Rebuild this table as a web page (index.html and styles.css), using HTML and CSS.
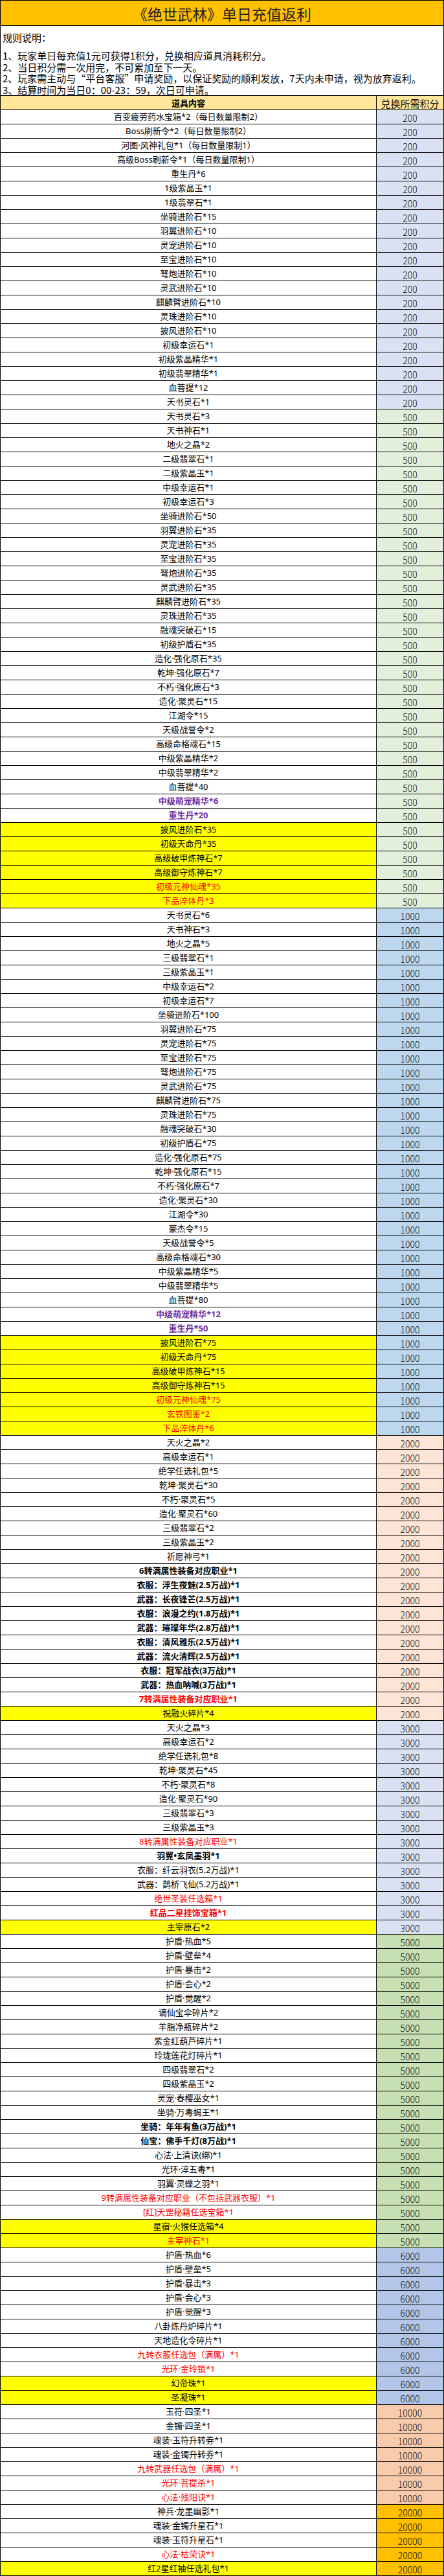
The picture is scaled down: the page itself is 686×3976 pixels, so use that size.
FILE: index.html
```html
<!DOCTYPE html>
<html lang="zh-CN">
<head>
<meta charset="utf-8">
<title>《绝世武林》单日充值返利</title>
<link rel="stylesheet" href="styles.css">
</head>
<body>
<div class="sheet">
  <div class="title">《绝世武林》单日充值返利</div>
  <div class="rules">
    <p class="rules-head">规则说明：</p>
    <p>1、玩家单日每充值1元可获得1积分，兑换相应道具消耗积分。</p>
    <p>2、当日积分需一次用完，不可累加至下一天。</p>
    <p>2、玩家需主动与“平台客服”申请奖励，以保证奖励的顺利发放，7天内未申请，视为放弃返利。</p>
    <p>3、结算时间为当日0：00-23：59，次日可申请。</p>
  </div>
  <div class="row head"><div class="item">道具内容</div><div class="pts">兑换所需积分</div></div>

  <div class="row"><div class="item">百变疲劳药水宝箱*2（每日数量限制2）</div><div class="pts p200">200</div></div>
  <div class="row"><div class="item">Boss刷新令*2（每日数量限制2）</div><div class="pts p200">200</div></div>
  <div class="row"><div class="item">河图·风神礼包*1（每日数量限制1）</div><div class="pts p200">200</div></div>
  <div class="row"><div class="item">高级Boss刷新令*1（每日数量限制1）</div><div class="pts p200">200</div></div>
  <div class="row"><div class="item">重生丹*6</div><div class="pts p200">200</div></div>
  <div class="row"><div class="item">1级紫晶玉*1</div><div class="pts p200">200</div></div>
  <div class="row"><div class="item">1级翡翠石*1</div><div class="pts p200">200</div></div>
  <div class="row"><div class="item">坐骑进阶石*15</div><div class="pts p200">200</div></div>
  <div class="row"><div class="item">羽翼进阶石*10</div><div class="pts p200">200</div></div>
  <div class="row"><div class="item">灵宠进阶石*10</div><div class="pts p200">200</div></div>
  <div class="row"><div class="item">至宝进阶石*10</div><div class="pts p200">200</div></div>
  <div class="row"><div class="item">弩炮进阶石*10</div><div class="pts p200">200</div></div>
  <div class="row"><div class="item">灵武进阶石*10</div><div class="pts p200">200</div></div>
  <div class="row"><div class="item">麒麟臂进阶石*10</div><div class="pts p200">200</div></div>
  <div class="row"><div class="item">灵珠进阶石*10</div><div class="pts p200">200</div></div>
  <div class="row"><div class="item">披风进阶石*10</div><div class="pts p200">200</div></div>
  <div class="row"><div class="item">初级幸运石*1</div><div class="pts p200">200</div></div>
  <div class="row"><div class="item">初级紫晶精华*1</div><div class="pts p200">200</div></div>
  <div class="row"><div class="item">初级翡翠精华*1</div><div class="pts p200">200</div></div>
  <div class="row"><div class="item">血菩提*12</div><div class="pts p200">200</div></div>
  <div class="row"><div class="item">天书灵石*1</div><div class="pts p200">200</div></div>

  <div class="row"><div class="item">天书灵石*3</div><div class="pts p500">500</div></div>
  <div class="row"><div class="item">天书神石*1</div><div class="pts p500">500</div></div>
  <div class="row"><div class="item">地火之晶*2</div><div class="pts p500">500</div></div>
  <div class="row"><div class="item">二级翡翠石*1</div><div class="pts p500">500</div></div>
  <div class="row"><div class="item">二级紫晶玉*1</div><div class="pts p500">500</div></div>
  <div class="row"><div class="item">中级幸运石*1</div><div class="pts p500">500</div></div>
  <div class="row"><div class="item">初级幸运石*3</div><div class="pts p500">500</div></div>
  <div class="row"><div class="item">坐骑进阶石*50</div><div class="pts p500">500</div></div>
  <div class="row"><div class="item">羽翼进阶石*35</div><div class="pts p500">500</div></div>
  <div class="row"><div class="item">灵宠进阶石*35</div><div class="pts p500">500</div></div>
  <div class="row"><div class="item">至宝进阶石*35</div><div class="pts p500">500</div></div>
  <div class="row"><div class="item">弩炮进阶石*35</div><div class="pts p500">500</div></div>
  <div class="row"><div class="item">灵武进阶石*35</div><div class="pts p500">500</div></div>
  <div class="row"><div class="item">麒麟臂进阶石*35</div><div class="pts p500">500</div></div>
  <div class="row"><div class="item">灵珠进阶石*35</div><div class="pts p500">500</div></div>
  <div class="row"><div class="item">融魂突破石*15</div><div class="pts p500">500</div></div>
  <div class="row"><div class="item">初级护盾石*35</div><div class="pts p500">500</div></div>
  <div class="row"><div class="item">造化·强化原石*35</div><div class="pts p500">500</div></div>
  <div class="row"><div class="item">乾坤·强化原石*7</div><div class="pts p500">500</div></div>
  <div class="row"><div class="item">不朽·强化原石*3</div><div class="pts p500">500</div></div>
  <div class="row"><div class="item">造化·聚灵石*15</div><div class="pts p500">500</div></div>
  <div class="row"><div class="item">江湖令*15</div><div class="pts p500">500</div></div>
  <div class="row"><div class="item">天级战誉令*2</div><div class="pts p500">500</div></div>
  <div class="row"><div class="item">高级命格魂石*15</div><div class="pts p500">500</div></div>
  <div class="row"><div class="item">中级紫晶精华*2</div><div class="pts p500">500</div></div>
  <div class="row"><div class="item">中级翡翠精华*2</div><div class="pts p500">500</div></div>
  <div class="row"><div class="item">血菩提*40</div><div class="pts p500">500</div></div>
  <div class="row"><div class="item purple">中级萌宠精华*6</div><div class="pts p500">500</div></div>
  <div class="row"><div class="item purple">重生丹*20</div><div class="pts p500">500</div></div>
  <div class="row hl"><div class="item">披风进阶石*35</div><div class="pts p500">500</div></div>
  <div class="row hl"><div class="item">初级天命丹*35</div><div class="pts p500">500</div></div>
  <div class="row hl"><div class="item">高级破甲炼神石*7</div><div class="pts p500">500</div></div>
  <div class="row hl"><div class="item">高级御守炼神石*7</div><div class="pts p500">500</div></div>
  <div class="row hl"><div class="item red">初级元神仙魂*35</div><div class="pts p500">500</div></div>
  <div class="row hl"><div class="item red">下品淬体丹*3</div><div class="pts p500">500</div></div>

  <div class="row"><div class="item">天书灵石*6</div><div class="pts p1000">1000</div></div>
  <div class="row"><div class="item">天书神石*3</div><div class="pts p1000">1000</div></div>
  <div class="row"><div class="item">地火之晶*5</div><div class="pts p1000">1000</div></div>
  <div class="row"><div class="item">三级翡翠石*1</div><div class="pts p1000">1000</div></div>
  <div class="row"><div class="item">三级紫晶玉*1</div><div class="pts p1000">1000</div></div>
  <div class="row"><div class="item">中级幸运石*2</div><div class="pts p1000">1000</div></div>
  <div class="row"><div class="item">初级幸运石*7</div><div class="pts p1000">1000</div></div>
  <div class="row"><div class="item">坐骑进阶石*100</div><div class="pts p1000">1000</div></div>
  <div class="row"><div class="item">羽翼进阶石*75</div><div class="pts p1000">1000</div></div>
  <div class="row"><div class="item">灵宠进阶石*75</div><div class="pts p1000">1000</div></div>
  <div class="row"><div class="item">至宝进阶石*75</div><div class="pts p1000">1000</div></div>
  <div class="row"><div class="item">弩炮进阶石*75</div><div class="pts p1000">1000</div></div>
  <div class="row"><div class="item">灵武进阶石*75</div><div class="pts p1000">1000</div></div>
  <div class="row"><div class="item">麒麟臂进阶石*75</div><div class="pts p1000">1000</div></div>
  <div class="row"><div class="item">灵珠进阶石*75</div><div class="pts p1000">1000</div></div>
  <div class="row"><div class="item">融魂突破石*30</div><div class="pts p1000">1000</div></div>
  <div class="row"><div class="item">初级护盾石*75</div><div class="pts p1000">1000</div></div>
  <div class="row"><div class="item">造化·强化原石*75</div><div class="pts p1000">1000</div></div>
  <div class="row"><div class="item">乾坤·强化原石*15</div><div class="pts p1000">1000</div></div>
  <div class="row"><div class="item">不朽·强化原石*7</div><div class="pts p1000">1000</div></div>
  <div class="row"><div class="item">造化·聚灵石*30</div><div class="pts p1000">1000</div></div>
  <div class="row"><div class="item">江湖令*30</div><div class="pts p1000">1000</div></div>
  <div class="row"><div class="item">豪杰令*15</div><div class="pts p1000">1000</div></div>
  <div class="row"><div class="item">天级战誉令*5</div><div class="pts p1000">1000</div></div>
  <div class="row"><div class="item">高级命格魂石*30</div><div class="pts p1000">1000</div></div>
  <div class="row"><div class="item">中级紫晶精华*5</div><div class="pts p1000">1000</div></div>
  <div class="row"><div class="item">中级翡翠精华*5</div><div class="pts p1000">1000</div></div>
  <div class="row"><div class="item">血菩提*80</div><div class="pts p1000">1000</div></div>
  <div class="row"><div class="item purple">中级萌宠精华*12</div><div class="pts p1000">1000</div></div>
  <div class="row"><div class="item purple">重生丹*50</div><div class="pts p1000">1000</div></div>
  <div class="row hl"><div class="item">披风进阶石*75</div><div class="pts p1000">1000</div></div>
  <div class="row hl"><div class="item">初级天命丹*75</div><div class="pts p1000">1000</div></div>
  <div class="row hl"><div class="item">高级破甲炼神石*15</div><div class="pts p1000">1000</div></div>
  <div class="row hl"><div class="item">高级御守炼神石*15</div><div class="pts p1000">1000</div></div>
  <div class="row hl"><div class="item red">初级元神仙魂*75</div><div class="pts p1000">1000</div></div>
  <div class="row hl"><div class="item red">玄铁图鉴*2</div><div class="pts p1000">1000</div></div>
  <div class="row hl"><div class="item red">下品淬体丹*6</div><div class="pts p1000">1000</div></div>

  <div class="row"><div class="item">天火之晶*2</div><div class="pts p2000">2000</div></div>
  <div class="row"><div class="item">高级幸运石*1</div><div class="pts p2000">2000</div></div>
  <div class="row"><div class="item">绝学任选礼包*5</div><div class="pts p2000">2000</div></div>
  <div class="row"><div class="item">乾坤·聚灵石*30</div><div class="pts p2000">2000</div></div>
  <div class="row"><div class="item">不朽·聚灵石*5</div><div class="pts p2000">2000</div></div>
  <div class="row"><div class="item">造化·聚灵石*60</div><div class="pts p2000">2000</div></div>
  <div class="row"><div class="item">三级翡翠石*2</div><div class="pts p2000">2000</div></div>
  <div class="row"><div class="item">三级紫晶玉*2</div><div class="pts p2000">2000</div></div>
  <div class="row"><div class="item">祈愿神弓*1</div><div class="pts p2000">2000</div></div>
  <div class="row"><div class="item bold">6转满属性装备对应职业*1</div><div class="pts p2000">2000</div></div>
  <div class="row"><div class="item bold">衣服：浮生夜魅(2.5万战)*1</div><div class="pts p2000">2000</div></div>
  <div class="row"><div class="item bold">武器：长夜锋芒(2.5万战)*1</div><div class="pts p2000">2000</div></div>
  <div class="row"><div class="item bold">衣服：浪漫之约(1.8万战)*1</div><div class="pts p2000">2000</div></div>
  <div class="row"><div class="item bold">武器：璀璨年华(2.8万战)*1</div><div class="pts p2000">2000</div></div>
  <div class="row"><div class="item bold">衣服：清风雅乐(2.5万战)*1</div><div class="pts p2000">2000</div></div>
  <div class="row"><div class="item bold">武器：流火清辉(2.5万战)*1</div><div class="pts p2000">2000</div></div>
  <div class="row"><div class="item bold">衣服：冠军战衣(3万战)*1</div><div class="pts p2000">2000</div></div>
  <div class="row"><div class="item bold">武器：热血呐喊(3万战)*1</div><div class="pts p2000">2000</div></div>
  <div class="row"><div class="item bold red">7转满属性装备对应职业*1</div><div class="pts p2000">2000</div></div>
  <div class="row hl"><div class="item">祝融火碎片*4</div><div class="pts p2000">2000</div></div>

  <div class="row"><div class="item">天火之晶*3</div><div class="pts p3000">3000</div></div>
  <div class="row"><div class="item">高级幸运石*2</div><div class="pts p3000">3000</div></div>
  <div class="row"><div class="item">绝学任选礼包*8</div><div class="pts p3000">3000</div></div>
  <div class="row"><div class="item">乾坤·聚灵石*45</div><div class="pts p3000">3000</div></div>
  <div class="row"><div class="item">不朽·聚灵石*8</div><div class="pts p3000">3000</div></div>
  <div class="row"><div class="item">造化·聚灵石*90</div><div class="pts p3000">3000</div></div>
  <div class="row"><div class="item">三级翡翠石*3</div><div class="pts p3000">3000</div></div>
  <div class="row"><div class="item">三级紫晶玉*3</div><div class="pts p3000">3000</div></div>
  <div class="row"><div class="item red">8转满属性装备对应职业*1</div><div class="pts p3000">3000</div></div>
  <div class="row"><div class="item bold">羽翼•玄凤墨羽*1</div><div class="pts p3000">3000</div></div>
  <div class="row"><div class="item">衣服：纤云羽衣(5.2万战)*1</div><div class="pts p3000">3000</div></div>
  <div class="row"><div class="item">武器：鹊桥飞仙(5.2万战)*1</div><div class="pts p3000">3000</div></div>
  <div class="row"><div class="item red">绝世圣装任选箱*1</div><div class="pts p3000">3000</div></div>
  <div class="row"><div class="item bold red">红品二星挂饰宝箱*1</div><div class="pts p3000">3000</div></div>
  <div class="row hl"><div class="item">主宰原石*2</div><div class="pts p3000">3000</div></div>

  <div class="row"><div class="item">护盾·热血*5</div><div class="pts p5000">5000</div></div>
  <div class="row"><div class="item">护盾·壁垒*4</div><div class="pts p5000">5000</div></div>
  <div class="row"><div class="item">护盾·暴击*2</div><div class="pts p5000">5000</div></div>
  <div class="row"><div class="item">护盾·会心*2</div><div class="pts p5000">5000</div></div>
  <div class="row"><div class="item">护盾·觉醒*2</div><div class="pts p5000">5000</div></div>
  <div class="row"><div class="item">谪仙宝伞碎片*2</div><div class="pts p5000">5000</div></div>
  <div class="row"><div class="item">羊脂净瓶碎片*2</div><div class="pts p5000">5000</div></div>
  <div class="row"><div class="item">紫金红葫芦碎片*1</div><div class="pts p5000">5000</div></div>
  <div class="row"><div class="item">玲珑莲花灯碎片*1</div><div class="pts p5000">5000</div></div>
  <div class="row"><div class="item">四级翡翠石*2</div><div class="pts p5000">5000</div></div>
  <div class="row"><div class="item">四级紫晶玉*2</div><div class="pts p5000">5000</div></div>
  <div class="row"><div class="item">灵宠·春樱巫女*1</div><div class="pts p5000">5000</div></div>
  <div class="row"><div class="item">坐骑·万毒蝎王*1</div><div class="pts p5000">5000</div></div>
  <div class="row"><div class="item bold">坐骑：年年有鱼(3万战)*1</div><div class="pts p5000">5000</div></div>
  <div class="row"><div class="item bold">仙宝：佛手千灯(8万战)*1</div><div class="pts p5000">5000</div></div>
  <div class="row"><div class="item">心法·上清诀(绑)*1</div><div class="pts p5000">5000</div></div>
  <div class="row"><div class="item">光环·淬五毒*1</div><div class="pts p5000">5000</div></div>
  <div class="row"><div class="item">羽翼·灵蝶之羽*1</div><div class="pts p5000">5000</div></div>
  <div class="row"><div class="item red">9转满属性装备对应职业（不包括武器衣服）*1</div><div class="pts p5000">5000</div></div>
  <div class="row"><div class="item red">[红]天罡秘籍任选宝箱*1</div><div class="pts p5000">5000</div></div>
  <div class="row hl"><div class="item">星宿·火猴任选箱*4</div><div class="pts p5000">5000</div></div>
  <div class="row hl"><div class="item red">主宰神石*1</div><div class="pts p5000">5000</div></div>

  <div class="row"><div class="item">护盾·热血*6</div><div class="pts p6000">6000</div></div>
  <div class="row"><div class="item">护盾·壁垒*5</div><div class="pts p6000">6000</div></div>
  <div class="row"><div class="item">护盾·暴击*3</div><div class="pts p6000">6000</div></div>
  <div class="row"><div class="item">护盾·会心*3</div><div class="pts p6000">6000</div></div>
  <div class="row"><div class="item">护盾·觉醒*3</div><div class="pts p6000">6000</div></div>
  <div class="row"><div class="item">八卦炼丹炉碎片*1</div><div class="pts p6000">6000</div></div>
  <div class="row"><div class="item">天地造化令碎片*1</div><div class="pts p6000">6000</div></div>
  <div class="row"><div class="item red">九转衣服任选包（满属）*1</div><div class="pts p6000">6000</div></div>
  <div class="row"><div class="item red">光环·金玲锁*1</div><div class="pts p6000">6000</div></div>
  <div class="row hl"><div class="item">幻帝珠*1</div><div class="pts p6000">6000</div></div>
  <div class="row hl"><div class="item">圣凝珠*1</div><div class="pts p6000">6000</div></div>

  <div class="row"><div class="item">玉符·四圣*1</div><div class="pts p10000">10000</div></div>
  <div class="row"><div class="item">金镯·四圣*1</div><div class="pts p10000">10000</div></div>
  <div class="row"><div class="item">魂装·玉符升转券*1</div><div class="pts p10000">10000</div></div>
  <div class="row"><div class="item">魂装·金镯升转券*1</div><div class="pts p10000">10000</div></div>
  <div class="row"><div class="item red">九转武器任选包（满属）*1</div><div class="pts p10000">10000</div></div>
  <div class="row"><div class="item red">光环·菩提杀*1</div><div class="pts p10000">10000</div></div>
  <div class="row"><div class="item red">心法·残阳诀*1</div><div class="pts p10000">10000</div></div>

  <div class="row"><div class="item">神兵·龙墨幽影*1</div><div class="pts p20000">20000</div></div>
  <div class="row"><div class="item">魂装·金镯升星石*1</div><div class="pts p20000">20000</div></div>
  <div class="row"><div class="item">魂装·玉符升星石*1</div><div class="pts p20000">20000</div></div>
  <div class="row"><div class="item red">心法·枯荣诀*1</div><div class="pts p20000">20000</div></div>
  <div class="row hl"><div class="item">红2星红袖任选礼包*1</div><div class="pts p20000">20000</div></div>
</div>
</body>
</html>
```
FILE: styles.css
```css
* {
  box-sizing: border-box;
}

body {
  margin: 0;
  background: #ffffff;
  color: #000000;
  font-family: "Noto Sans CJK SC", "Liberation Sans", sans-serif;
}

.sheet {
  width: 686px;
  border-left: 1px solid #000;
  border-right: 1px solid #000;
  border-top: 1px solid #000;
}

.title {
  height: 39px;
  background: #ffc000;
  border-bottom: 1px solid #000;
  display: flex;
  align-items: center;
  justify-content: center;
  padding-top: 3px;
  font-size: 23px;
  color: #222;
  line-height: 1;
}

.rules {
  height: 108px;
  border-bottom: 1px solid #000;
  padding: 9px 3px 0;
  font-size: 15px;
  overflow: hidden;
}

.rules p {
  margin: 0;
  line-height: 17.5px;
  white-space: nowrap;
}

.rules .rules-head {
  line-height: 18px;
  margin-bottom: 10px;
}

.row {
  display: grid;
  grid-template-columns: 581px 1fr;
  height: 22px;
}

.item {
  border-right: 1px solid #000;
  border-bottom: 1px solid #000;
  display: flex;
  align-items: center;
  justify-content: center;
  font-family: "Noto Sans", "Noto Sans CJK SC", sans-serif;
  font-size: 13px;
  line-height: 1;
  white-space: nowrap;
}

.pts {
  border-bottom: 1px solid #000;
  display: flex;
  align-items: center;
  justify-content: center;
  padding-top: 3px;
  font-size: 14px;
  font-weight: 300;
  line-height: 1;
  color: #111;
}

.head {
  background: #ffe699;
}

.head .item {
  font-family: "Noto Sans CJK SC", sans-serif;
  font-weight: bold;
}

.head .pts {
  font-size: 15px;
  font-weight: normal;
  padding-top: 2px;
}

.hl .item {
  background: #ffff00;
}

.purple {
  color: #7030a0;
  font-weight: bold;
}

.bold {
  font-weight: bold;
}

.red {
  color: #ff0000;
}

.p200 { background: #d9e1f2; }
.p500 { background: #e2efda; }
.p1000 { background: #bdd7ee; }
.p2000 { background: #fce4d6; }
.p3000 { background: #d9e1f2; }
.p5000 { background: #c6e0b4; }
.p6000 { background: #b4c6e7; }
.p10000 { background: #f8cbad; }
.p20000 { background: #ffc000; }
```
